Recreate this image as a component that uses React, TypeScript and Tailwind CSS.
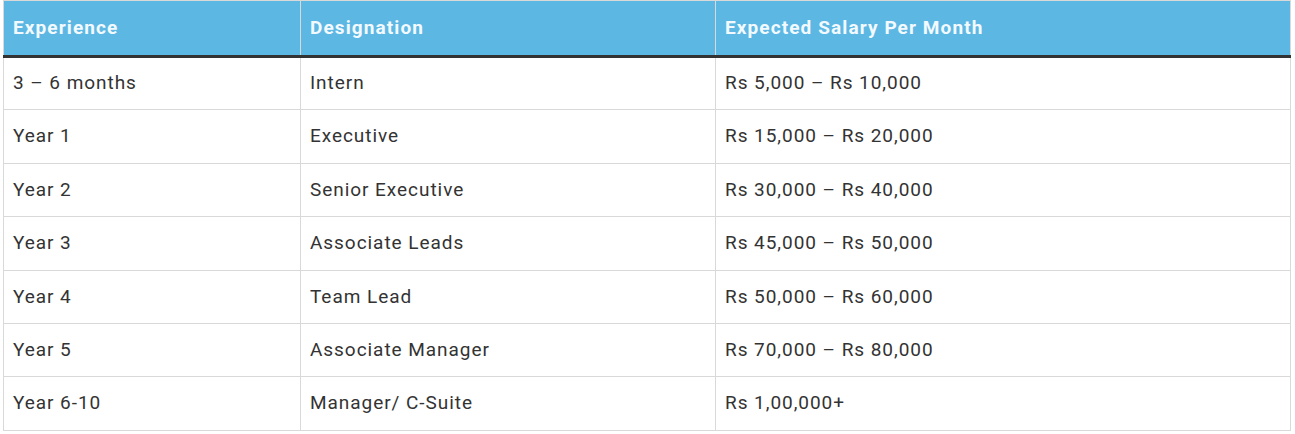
const rows = [
  ["3 – 6 months", "Intern", "Rs 5,000 – Rs 10,000"],
  ["Year 1", "Executive", "Rs 15,000 – Rs 20,000"],
  ["Year 2", "Senior Executive", "Rs 30,000 – Rs 40,000"],
  ["Year 3", "Associate Leads", "Rs 45,000 – Rs 50,000"],
  ["Year 4", "Team Lead", "Rs 50,000 – Rs 60,000"],
  ["Year 5", "Associate Manager", "Rs 70,000 – Rs 80,000"],
  ["Year 6-10", "Manager/ C-Suite", "Rs 1,00,000+"],
];

export default function App() {
  return (
    <div className="min-h-screen bg-white pl-[3px] font-['Roboto',sans-serif]">
      <table className="w-[1288px] border-collapse border border-[#d9d9d9] text-left">
        <thead>
          <tr className="h-[56px] border-b-[3px] border-b-[#333333] bg-[#5db7e3] text-[19px] font-bold tracking-[1.1px] text-[#f3faff]">
            <th className="w-[297px] border-r border-[#d9d9d9] pl-[9px] pr-[10px]">Experience</th>
            <th className="w-[415px] border-r border-[#d9d9d9] pl-[9px] pr-[10px]">Designation</th>
            <th className="pl-[9px] pr-[10px]">Expected Salary Per Month</th>
          </tr>
        </thead>
        <tbody className="text-[19px] tracking-[0.95px] text-[#333333]">
          {rows.map((r, i) => (
            <tr key={i} className="h-[53.4px] border-b border-[#d9d9d9]">
              {r.map((c, j) => (
                <td key={j} className="border-r border-[#d9d9d9] pl-[9px] pr-[10px]">
                  {c}
                </td>
              ))}
            </tr>
          ))}
        </tbody>
      </table>
    </div>
  );
}
